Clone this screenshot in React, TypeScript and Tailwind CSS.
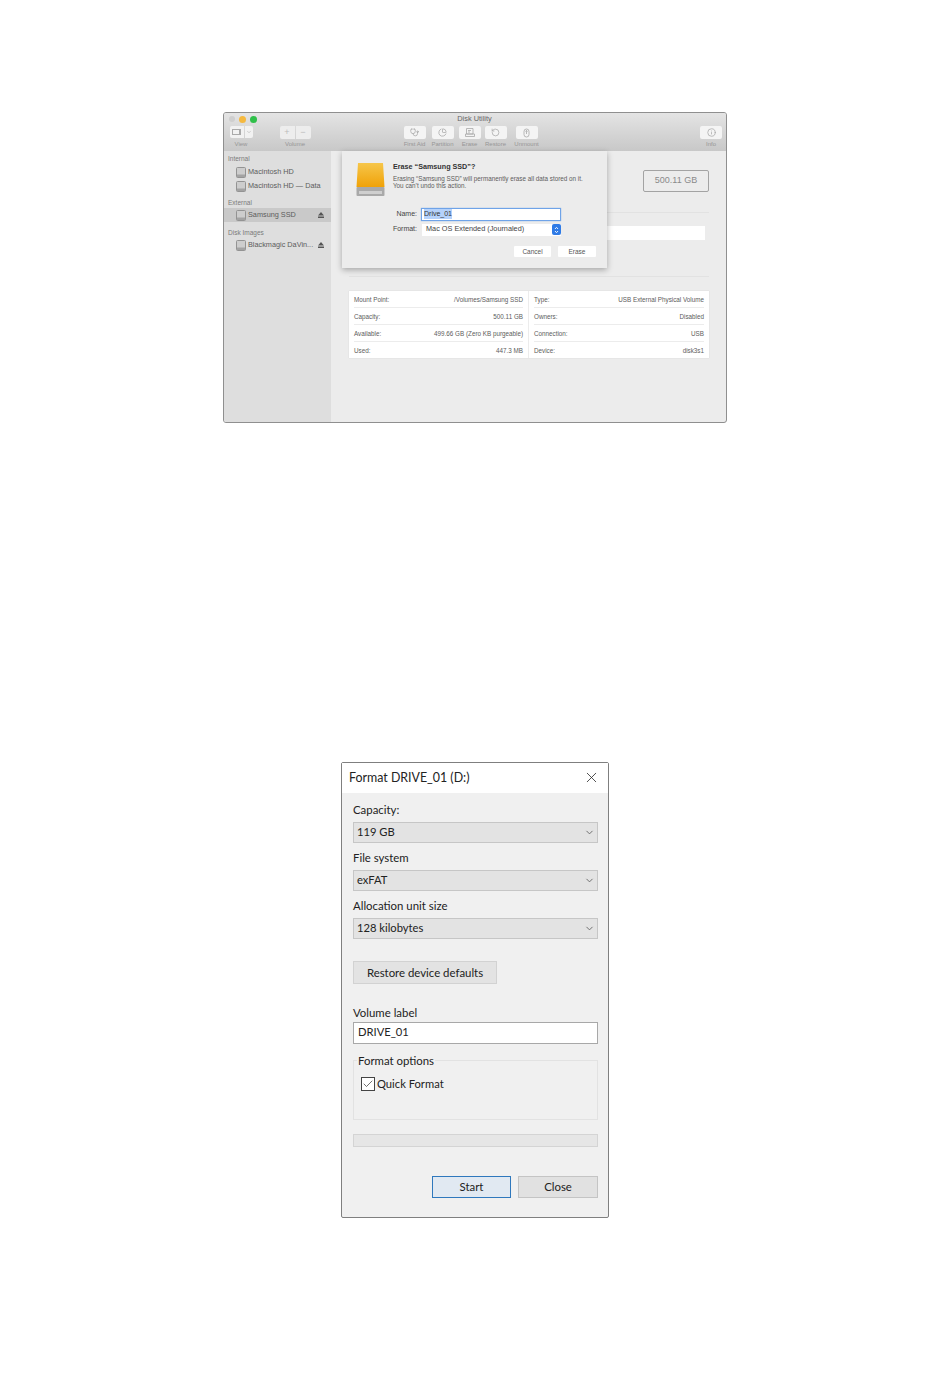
import { ChevronDown, Check, Info, PieChart, RotateCcw, Stethoscope, X } from 'lucide-react';

const mac = "[font-family:'Liberation_Sans',Arial,sans-serif]";
const win = "[font-family:'Lato','Open_Sans',sans-serif]";

const DiskIcon = () => (
  <svg width="10" height="11" viewBox="0 0 10 11" className="shrink-0">
    <rect x="0.5" y="0.5" width="9" height="10" rx="1" fill="#cdcdcd" stroke="#939393" />
    <rect x="1" y="7.5" width="8" height="2.5" fill="#a3a3a3" />
  </svg>
);

const Eject = () => (
  <svg width="6" height="6" viewBox="0 0 6 6" className="shrink-0">
    <path d="M3 0 L6 3.6 H0 Z M0 4.6 H6 V6 H0 Z" fill="#555" />
  </svg>
);

const SideHead = ({ text, className }: { text: string; className: string }) => (
  <div className={`pl-[4px] text-[6.5px] leading-[8px] text-[#7a7a7a] ${className}`}>{text}</div>
);

const SideRow = ({ text, eject, active }: { text: string; eject?: boolean; active?: boolean }) => (
  <div className={`flex h-[14px] items-center gap-[2px] pl-[12px] pr-[7px] ${active ? 'bg-[#c9c9c9]' : ''}`}>
    <DiskIcon />
    <span className="flex-1 whitespace-nowrap text-[7.3px] text-[#5c5c5c]">{text}</span>
    {eject && <Eject />}
  </div>
);

const ToolBtn = ({ label, w, children }: { label: string; w: string; children: React.ReactNode }) => (
  <div className={`flex flex-col items-center ${w}`}>
    <div className="flex h-[13px] w-[22px] items-center justify-center rounded-[2px] bg-[#f4f4f4] text-[#a8a8a8]">
      {children}
    </div>
    <span className="mt-[2px] whitespace-nowrap text-[6px] leading-[7px] text-[#969696]">{label}</span>
  </div>
);

const InfoRow = ({ k, v, last }: { k: string; v: string; last?: boolean }) => (
  <div className={`flex items-center justify-between whitespace-nowrap pt-[1px] text-[6.3px] text-[#5c5c5c] ${last ? 'h-[16px]' : 'h-[17px] border-b border-[#ececec]'}`}>
    <span>{k}</span>
    <span>{v}</span>
  </div>
);

const MacWindow = () => (
  <div className={`relative flex h-[311px] w-[504px] flex-col overflow-hidden rounded-[3px] border border-[#8f8f8f] bg-[#ececec] ${mac}`}>
    {/* toolbar */}
    <div className="h-[38px] shrink-0 bg-gradient-to-b from-[#e4e4e4] to-[#c8c8c8] pl-[5px] pr-[4px] pt-[2px]">
      <div className="relative flex h-[8px] items-center gap-[4px]">
        <span className="h-[6px] w-[6px] rounded-full bg-[#cfcfcf]" />
        <span className="h-[7px] w-[7px] rounded-full bg-[#f5b93f]" />
        <span className="h-[7px] w-[7px] rounded-full bg-[#30c04a]" />
        <span className="flex-1 pr-[34px] text-center text-[7.4px] leading-[8px] text-[#666]">Disk Utility</span>
      </div>
      <div className="mt-[3px] flex items-start">
        <div className="flex w-[24px] flex-col items-center">
          <div className="flex h-[12px] w-[23px] items-center gap-[1px]">
            <div className="flex h-[12px] w-[14px] items-center justify-center rounded-l-[2px] bg-[#f2f2f2]">
              <span className="h-[6px] w-[9px] border border-[#aaa] pl-[2px]">
                <span className="block h-full border-r border-[#aaa]" />
              </span>
            </div>
            <div className="flex h-[12px] w-[8px] items-center justify-center rounded-r-[2px] bg-[#f2f2f2]">
              <ChevronDown size={6} color="#aaa" />
            </div>
          </div>
          <span className="mt-[3px] text-[6px] leading-[7px] text-[#969696]">View</span>
        </div>
        <div className="ml-[26px] flex w-[32px] flex-col items-center">
          <div className="flex h-[13px] gap-[1px] text-[9px] leading-[12px] text-[#bbb]">
            <span className="w-[15px] rounded-l-[2px] bg-[#ededed] text-center">+</span>
            <span className="w-[15px] rounded-r-[2px] bg-[#ededed] text-center">−</span>
          </div>
          <span className="mt-[2px] text-[6px] leading-[7px] text-[#969696]">Volume</span>
        </div>
        <div className="ml-[92px] flex gap-[5px]">
          <ToolBtn label="First Aid" w="w-[23px]"><Stethoscope size={9} /></ToolBtn>
          <ToolBtn label="Partition" w="w-[23px]"><PieChart size={9} /></ToolBtn>
          <ToolBtn label="Erase" w="w-[21px]">
            <svg width="10" height="9" viewBox="0 0 10 9" fill="none" stroke="currentColor" strokeWidth="0.8">
              <path d="M1.5 0.5 H8 V6 H1.5 Z M0.5 6 H9.5 V8.5 H0.5 Z M3 2.5 H6 M3 4 H5" />
            </svg>
          </ToolBtn>
          <ToolBtn label="Restore" w="w-[21px]"><RotateCcw size={9} /></ToolBtn>
          <ToolBtn label="Unmount" w="w-[31px]">
            <svg width="7" height="10" viewBox="0 0 7 10" fill="none" stroke="currentColor" strokeWidth="0.8">
              <rect x="1" y="1" width="5" height="8" rx="2.5" />
              <path d="M3.5 2.5 V6 M2.3 3.6 L3.5 2.4 L4.7 3.6" />
            </svg>
          </ToolBtn>
        </div>
        <div className="ml-auto">
          <ToolBtn label="Info" w="w-[22px]"><Info size={9} /></ToolBtn>
        </div>
      </div>
    </div>

    <div className="flex flex-1">
      {/* sidebar */}
      <div className="flex w-[107px] shrink-0 flex-col bg-[#dedede] pt-[4px]">
        <SideHead text="Internal" className="mb-[2px]" />
        <SideRow text="Macintosh HD" />
        <SideRow text="Macintosh HD — Data" />
        <SideHead text="External" className="mb-[1px] mt-[6px]" />
        <SideRow text="Samsung SSD" eject active />
        <SideHead text="Disk Images" className="mb-[1px] mt-[7px]" />
        <SideRow text="Blackmagic DaVin..." eject />
      </div>

      {/* main */}
      <div className="flex flex-1 flex-col pl-[18px] pr-[17px]">
        <div className="mt-[19px] flex h-[22px] justify-end">
          <div className="flex w-[66px] items-center justify-center rounded-[2px] border border-[#a3a3a3] text-[9px] text-[#8a8a8a]">500.11 GB</div>
        </div>
        <div className="mt-[20px] border-t border-[#e2e2e2]" />
        <div className="mr-[4px] mt-[13px] h-[14px] bg-white" />
        <div className="mt-[36px] border-t border-[#e2e2e2]" />
        <div className="mt-[14px] grid grid-cols-2 bg-white shadow-[0_0_1px_rgba(0,0,0,0.15)]">
          <div className="border-r border-[#ececec] px-[5px]">
            <InfoRow k="Mount Point:" v="/Volumes/Samsung SSD" />
            <InfoRow k="Capacity:" v="500.11 GB" />
            <InfoRow k="Available:" v="499.66 GB (Zero KB purgeable)" />
            <InfoRow k="Used:" v="447.3 MB" last />
          </div>
          <div className="px-[5px]">
            <InfoRow k="Type:" v="USB External Physical Volume" />
            <InfoRow k="Owners:" v="Disabled" />
            <InfoRow k="Connection:" v="USB" />
            <InfoRow k="Device:" v="disk3s1" last />
          </div>
        </div>
      </div>
    </div>

    {/* erase sheet */}
    <div className="absolute left-[118px] top-[38px] h-[117px] w-[265px] bg-[#ececec] shadow-[0_2px_6px_rgba(0,0,0,0.3)]">
      <div className="flex pl-[14px] pt-[11px]">
        <svg width="29" height="33" viewBox="0 0 29 33" className="mt-[1px] shrink-0">
          <defs>
            <linearGradient id="drive" x1="0" y1="0" x2="0" y2="1">
              <stop offset="0" stopColor="#f6c64a" />
              <stop offset="1" stopColor="#f0a208" />
            </linearGradient>
          </defs>
          <path d="M2 0 H27 L28.5 24 H0.5 Z" fill="url(#drive)" />
          <rect x="0.5" y="24" width="28" height="9" rx="1" fill="#a9a9a9" />
          <rect x="3" y="28" width="23" height="3" fill="#cfcfcf" />
        </svg>
        <div className="ml-[8px]">
          <div className="whitespace-nowrap text-[7.2px] font-bold leading-[9px] text-[#333]">Erase “Samsung SSD”?</div>
          <div className="mt-[4px] whitespace-nowrap text-[6.3px] leading-[7px] text-[#5c5c5c]">
            Erasing “Samsung SSD” will permanently erase all data stored on it.
            <br />
            You can’t undo this action.
          </div>
        </div>
      </div>
      <div className="mt-[11px] flex h-[14px] items-center">
        <span className="w-[75px] text-right text-[7px] text-[#444]">Name:</span>
        <div className="ml-[4px] flex h-[13px] w-[140px] items-center border border-[#6fa3e8] bg-white pl-[2px] text-[7px] text-[#333] shadow-[0_0_1px_#6fa3e8]">
          <span className="bg-[#b5d2fb]">Drive_01</span>
        </div>
      </div>
      <div className="mt-[2px] flex h-[13px] items-center">
        <span className="w-[75px] text-right text-[7px] text-[#444]">Format:</span>
        <div className="ml-[5px] flex h-[12px] w-[139px] items-center justify-between bg-white pl-[4px] text-[7.3px] text-[#444]">
          <span>Mac OS Extended (Journaled)</span>
          <span className="flex h-[11px] w-[9px] items-center justify-center rounded-[2px] bg-[#2f7be6]">
            <svg width="5" height="8" viewBox="0 0 5 8" fill="none" stroke="#fff" strokeWidth="0.9">
              <path d="M1 3 L2.5 1.3 L4 3 M1 5 L2.5 6.7 L4 5" />
            </svg>
          </span>
        </div>
      </div>
      <div className="mr-[11px] mt-[10px] flex justify-end gap-[7px] text-[6.5px] text-[#555]">
        <span className="flex h-[11px] w-[37px] items-center justify-center rounded-[1px] bg-white">Cancel</span>
        <span className="flex h-[11px] w-[38px] items-center justify-center rounded-[1px] bg-white">Erase</span>
      </div>
    </div>
  </div>
);

const WinSelect = ({ label, value, top }: { label: string; value: string; top: string }) => (
  <div className={top}>
    <div className="h-[16px] text-[11.4px] leading-[16px] text-[#222]">{label}</div>
    <div className="mt-[4px] flex h-[21px] items-center justify-between border border-[#c6c6c6] bg-[#e3e3e3] pl-[3px] pr-[2px] text-[11.2px] text-[#222]">
      <span>{value}</span>
      <ChevronDown size={11} color="#666" />
    </div>
  </div>
);

const WinDialog = () => (
  <div className={`flex h-[456px] w-[268px] flex-col rounded-[2px] border border-[#7f7f7f] bg-[#f0f0f0] ${win}`}>
    <div className="flex h-[30px] shrink-0 items-center justify-between bg-white pl-[7px] pr-[8px]">
      <span className="mt-[1px] text-[12.4px] text-[#222]">Format DRIVE_01 (D:)</span>
      <X size={17} strokeWidth={1.1} color="#222" className="-mt-[2px]" />
    </div>
    <div className="flex flex-1 flex-col pl-[11px] pr-[10px]">
      <WinSelect label="Capacity:" value="119 GB" top="mt-[9px]" />
      <WinSelect label="File system" value="exFAT" top="mt-[7px]" />
      <WinSelect label="Allocation unit size" value="128 kilobytes" top="mt-[7px]" />
      <div className="mt-[22px] flex h-[23px] w-[144px] items-center justify-center border border-[#d2d2d2] bg-[#e3e3e3] text-[11.4px] text-[#222]">
        Restore device defaults
      </div>
      <div className="mt-[21px] h-[16px] text-[11.4px] leading-[16px] text-[#222]">Volume label</div>
      <div className="mt-[1px] flex h-[22px] items-center border border-[#a8a8a8] bg-white pb-[2px] pl-[4px] text-[11.2px] text-[#222]">DRIVE_01</div>
      <div className="relative mt-[16px] h-[60px] border border-[#e2e2e2] pl-[7px] pt-[15px]">
        <span className="absolute -top-[8px] left-[3px] bg-[#f0f0f0] px-[1px] text-[11.4px] leading-[16px] text-[#222]">Format options</span>
        <div className="flex items-center gap-[2px]">
          <span className="flex h-[14px] w-[14px] items-center justify-center border border-[#444] bg-white">
            <Check size={12} strokeWidth={1.3} color="#222" />
          </span>
          <span className="text-[11.2px] leading-[16px] text-[#222]">Quick Format</span>
        </div>
      </div>
      <div className="mt-[14px] h-[13px] border border-[#d4d4d4] bg-[#e6e6e6]" />
      <div className="mt-[29px] flex justify-end gap-[7px] text-[11.4px] text-[#222]">
        <span className="flex h-[22px] w-[79px] items-center justify-center border border-[#2f78bd] bg-[#e1e9f2]">Start</span>
        <span className="flex h-[22px] w-[80px] items-center justify-center border border-[#c4c4c4] bg-[#e1e1e1]">Close</span>
      </div>
    </div>
  </div>
);

const App = () => {
  return (
    <main className="flex min-h-[1387px] w-[950px] flex-col items-center bg-white pt-[112px]">
      <MacWindow />
      <div className="mt-[339px]">
        <WinDialog />
      </div>
    </main>
  );
};

export default App;
